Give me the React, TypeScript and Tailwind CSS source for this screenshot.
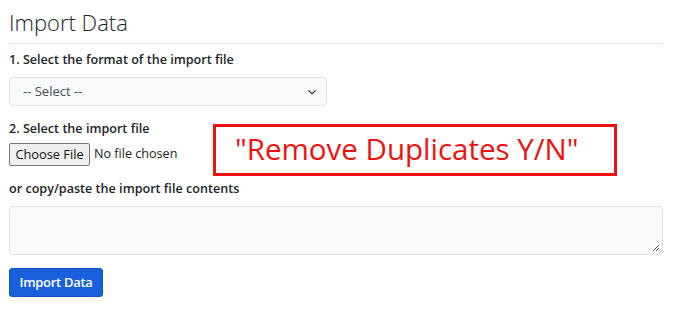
export default function App() {
  return (
    <div className="relative h-[325px] w-[690px] bg-white text-[#212529]" style={{ fontFamily: '"Open Sans", "Noto Sans", sans-serif' }}>
      <div className="pl-[9px] pr-[27px] pt-[6px]">
        <h1 className="text-[22px] font-light leading-[32px] text-[#212529]">Import Data</h1>
        <hr className="mt-[5px] border-t border-[#dcdfe3]" />
        <form className="flex flex-col">
          <label className="mt-[7px] text-[12.6px] font-semibold leading-[18px]">1. Select the format of the import file</label>
          <div className="mt-[8px] flex h-[29px] w-[318px] items-center justify-between rounded-[4px] border border-[#dee2e6] bg-[#f8f9fa] pl-[13px] pr-[9px] text-[13px] text-[#495057]">
            <span>-- Select --</span>
            <svg width="10" height="10" viewBox="0 0 16 16" fill="none" stroke="#343a40" strokeWidth="2" strokeLinecap="round" strokeLinejoin="round">
              <path d="M3 6l5 5 5-5" />
            </svg>
          </div>
          <label className="mt-[14px] text-[12.6px] font-semibold leading-[18px]">2. Select the import file</label>
          <div className="mt-[5px] flex items-center gap-[4px]">
            <span className="flex h-[23px] w-[81px] items-center justify-center rounded-[2px] border border-[#767676] bg-[#efefef] text-[12.8px] text-[#111]">Choose File</span>
            <span className="text-[12.6px] text-[#222]">No file chosen</span>
          </div>
          <label className="mt-[14px] text-[12.6px] font-semibold leading-[18px]">or copy/paste the import file contents</label>
          <div className="relative mt-[8px] h-[49px] w-[654px] rounded-[4px] border border-[#dee2e6] bg-[#f9fafb]">
            <svg className="absolute bottom-[2px] right-[2px]" width="8" height="8" viewBox="0 0 8 8" stroke="#555" strokeWidth="1">
              <path d="M1 7L7 1M4 7L7 4" />
            </svg>
          </div>
          <div className="mt-[13px] flex h-[29px] w-[94px] items-center justify-center rounded-[3px] border border-[#1453c4] bg-[#1a5fdb] text-[13px] font-semibold tracking-[-0.3px] text-white">Import Data</div>
        </form>
      </div>
      <div className="absolute left-[213px] top-[124px] flex h-[52px] w-[404px] items-center border-[3px] border-[#ee1111] pb-[3px] pl-[19px]">
        <span className="text-[29.5px] leading-none text-[#ee1111]">"Remove Duplicates Y/N"</span>
      </div>
    </div>
  );
}
